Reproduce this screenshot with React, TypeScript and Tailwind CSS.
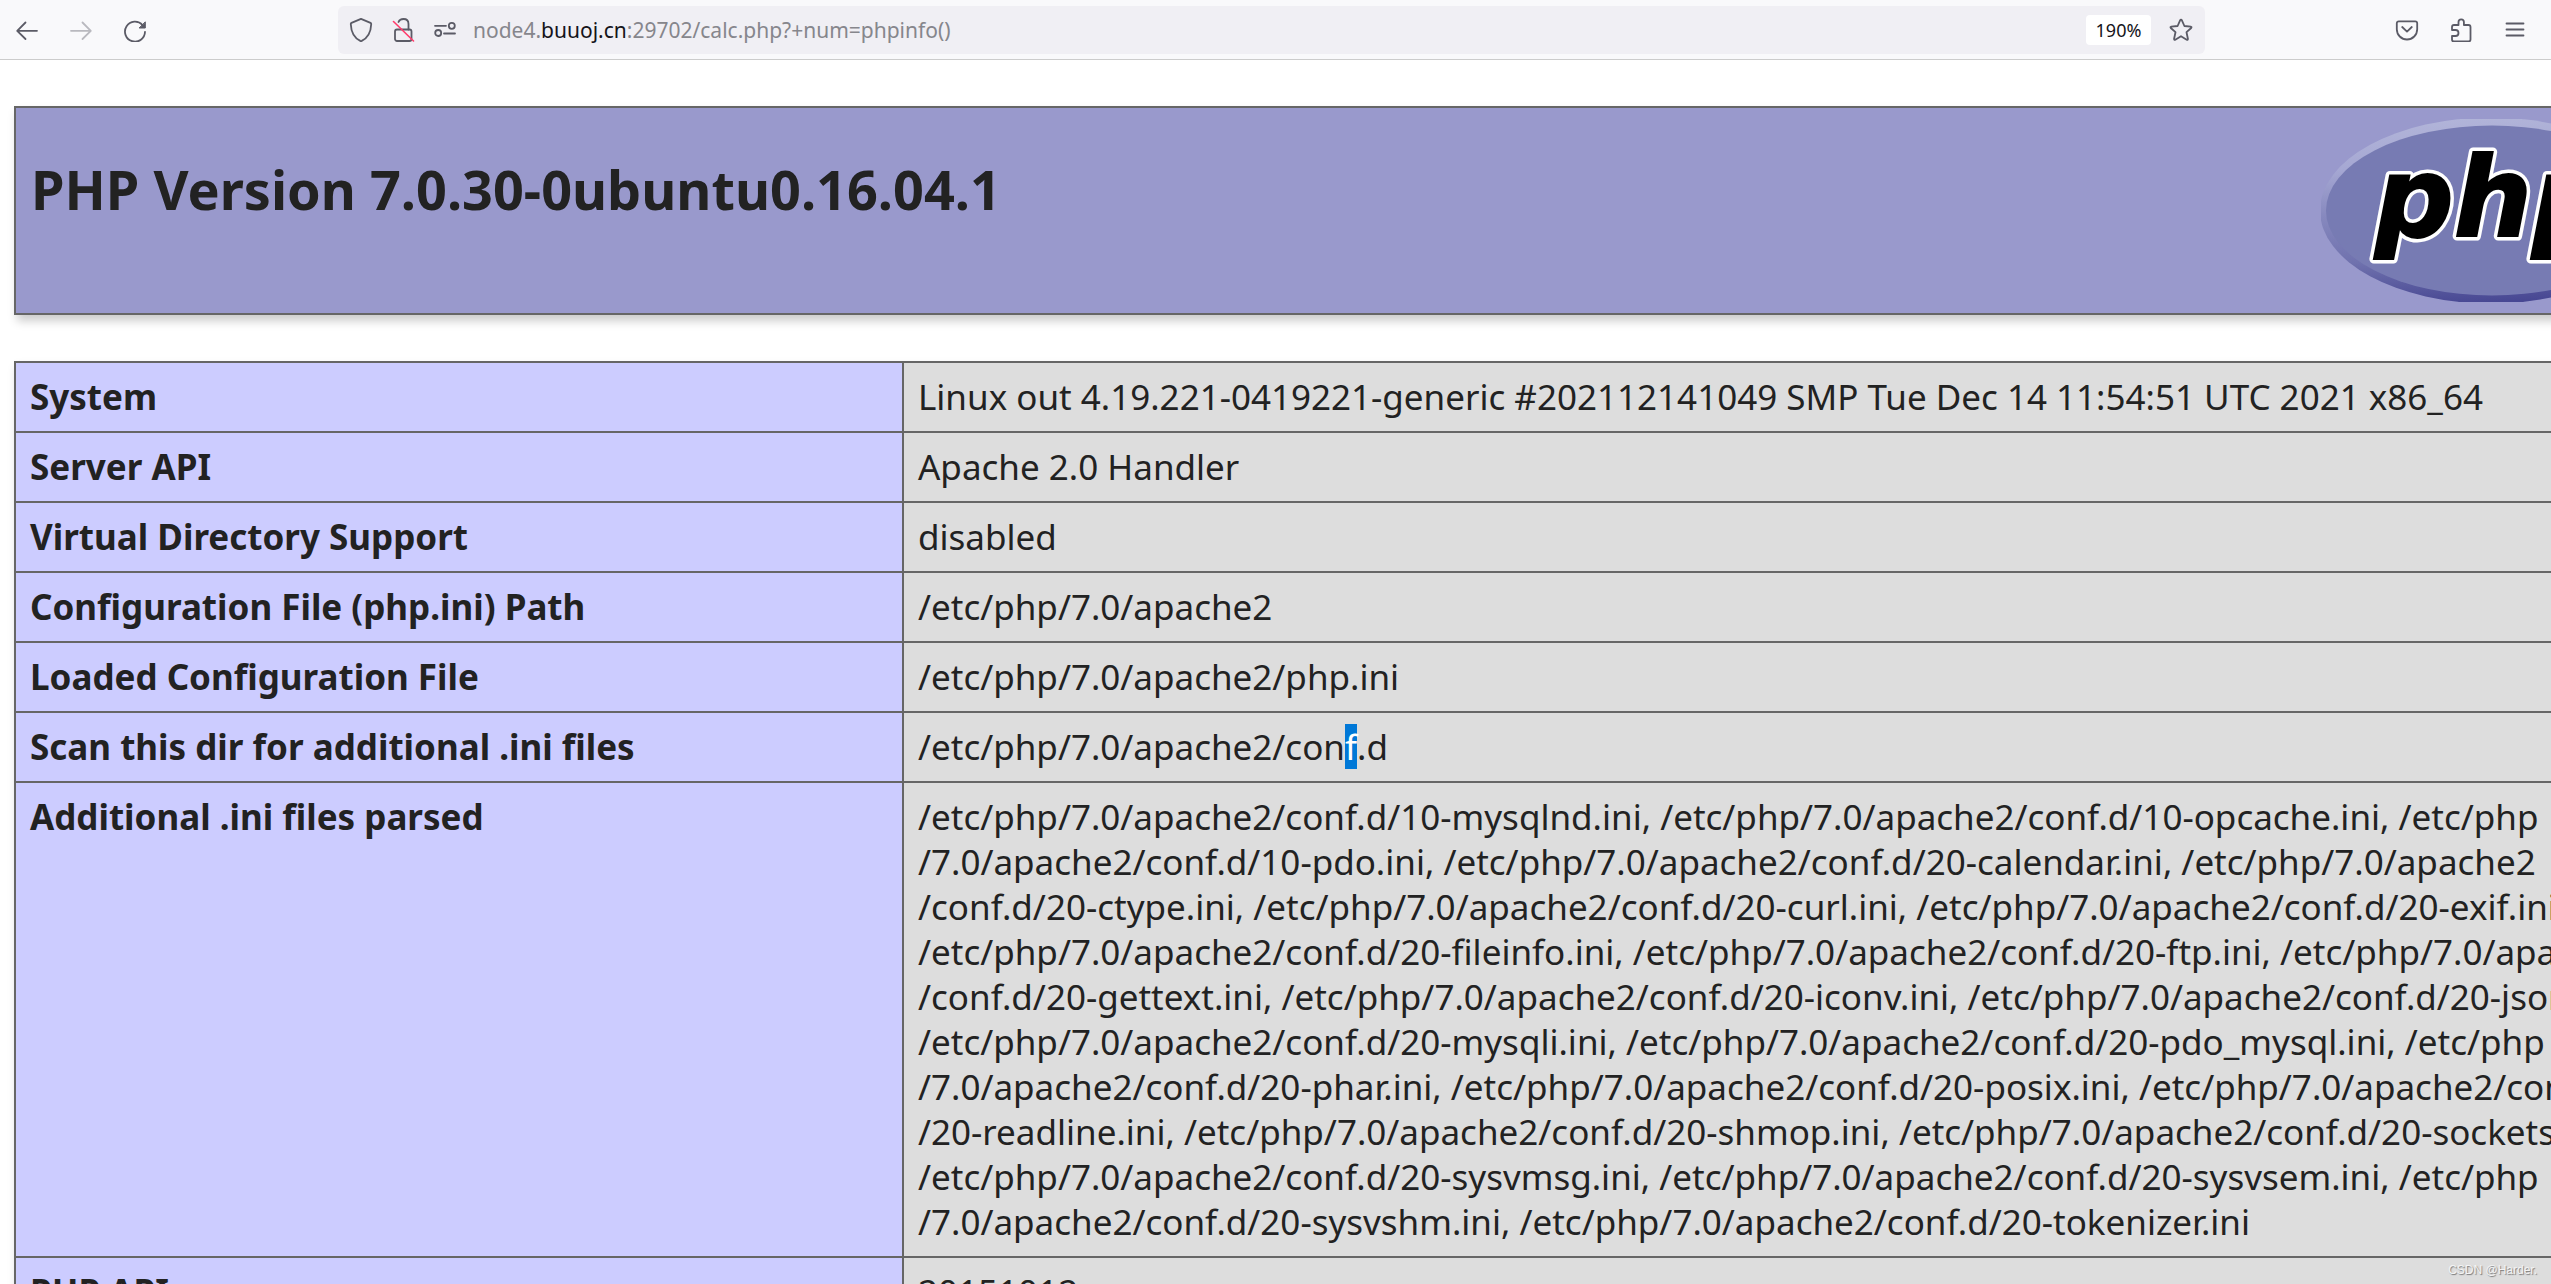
import type { ReactNode } from 'react'

interface InfoRow {
  name: string
  value: ReactNode
}

const parsedIniFiles = [
  '/etc/php/7.0/apache2/conf.d/10-mysqlnd.ini, /etc/php/7.0/apache2/conf.d/10-opcache.ini, /etc/php',
  '/7.0/apache2/conf.d/10-pdo.ini, /etc/php/7.0/apache2/conf.d/20-calendar.ini, /etc/php/7.0/apache2',
  '/conf.d/20-ctype.ini, /etc/php/7.0/apache2/conf.d/20-curl.ini, /etc/php/7.0/apache2/conf.d/20-exif.ini,',
  '/etc/php/7.0/apache2/conf.d/20-fileinfo.ini, /etc/php/7.0/apache2/conf.d/20-ftp.ini, /etc/php/7.0/apache2',
  '/conf.d/20-gettext.ini, /etc/php/7.0/apache2/conf.d/20-iconv.ini, /etc/php/7.0/apache2/conf.d/20-json.ini,',
  '/etc/php/7.0/apache2/conf.d/20-mysqli.ini, /etc/php/7.0/apache2/conf.d/20-pdo_mysql.ini, /etc/php',
  '/7.0/apache2/conf.d/20-phar.ini, /etc/php/7.0/apache2/conf.d/20-posix.ini, /etc/php/7.0/apache2/conf.d',
  '/20-readline.ini, /etc/php/7.0/apache2/conf.d/20-shmop.ini, /etc/php/7.0/apache2/conf.d/20-sockets.ini,',
  '/etc/php/7.0/apache2/conf.d/20-sysvmsg.ini, /etc/php/7.0/apache2/conf.d/20-sysvsem.ini, /etc/php',
  '/7.0/apache2/conf.d/20-sysvshm.ini, /etc/php/7.0/apache2/conf.d/20-tokenizer.ini',
]

const rows: InfoRow[] = [
  { name: 'System', value: 'Linux out 4.19.221-0419221-generic #202112141049 SMP Tue Dec 14 11:54:51 UTC 2021 x86_64' },
  { name: 'Server API', value: 'Apache 2.0 Handler' },
  { name: 'Virtual Directory Support', value: 'disabled' },
  { name: 'Configuration File (php.ini) Path', value: '/etc/php/7.0/apache2' },
  { name: 'Loaded Configuration File', value: '/etc/php/7.0/apache2/php.ini' },
  {
    name: 'Scan this dir for additional .ini files',
    value: (
      <>
        /etc/php/7.0/apache2/con<span className="inline-block bg-[#0078d7] text-white">f</span>.d
      </>
    ),
  },
  {
    name: 'Additional .ini files parsed',
    value: parsedIniFiles.map((line) => (
      <span key={line} className="block">
        {line}
      </span>
    )),
  },
  { name: 'PHP API', value: '20151012' },
]

const iconProps = {
  width: 24,
  height: 24,
  viewBox: '0 0 24 24',
  fill: 'none',
  stroke: 'currentColor',
  strokeWidth: 1.8,
  strokeLinecap: 'round' as const,
  strokeLinejoin: 'round' as const,
  'aria-hidden': true,
}

function BackIcon() {
  return (
    <svg {...iconProps}>
      <path d="M22 12.8H2.5M10.5 4.5L2.2 12.8l8.3 8.2" />
    </svg>
  )
}

function ForwardIcon() {
  return (
    <svg {...iconProps}>
      <path d="M2 12.8h19.5M13.5 4.5l8.3 8.3-8.3 8.2" />
    </svg>
  )
}

function ReloadIcon() {
  return (
    <svg {...iconProps}>
      <path d="M22 13.8A10 10 0 1 1 19.5 7" />
      <path d="M22.3 4.2v5.8h-5.8z" fill="currentColor" strokeWidth={1} />
    </svg>
  )
}

function ShieldIcon() {
  return (
    <svg {...iconProps}>
      <path d="M12 .2L21.5 4.2Q22.300 4.600 22.200 5.500C21.900 13.500 18.500 19.300 12.700 22.200Q12 22.500 11.300 22.200C5.500 19.300 2.100 13.500 1.800 5.500Q1.700 4.600 2.500 4.200L12 .2z" transform="translate(0 .7)" />
    </svg>
  )
}

function InsecureIcon() {
  return (
    <svg {...iconProps}>
      <rect x="4" y="11.5" width="16.5" height="11.5" rx="2" />
      <path d="M7.500 4C8.300 2 10 1 12.500 1c3 0 5 2 5 5v5.500" />
      <path d="M2.500 3.500l20 19.500" stroke="#ff3b6b" strokeWidth={1.6} />
    </svg>
  )
}

function PermissionsIcon() {
  return (
    <svg {...iconProps}>
      <circle cx="18.800" cy="7.800" r="3" />
      <circle cx="5.200" cy="15" r="3" />
      <path d="M2 7.800h11M11 15.500h11" />
    </svg>
  )
}

function StarIcon() {
  return (
    <svg {...iconProps}>
      <path d="M12 1.600q.6 0 .9.700l2.500 5.700 6.300.600q1.400.300.500 1.400l-4.700 4.200 1.400 6.600q.100 1.500-1.200.900L12 18.200l-5.700 3.500q-1.300.600-1.200-.900l1.400-6.600L1.800 10q-.900-1.100.500-1.400l6.300-.600L11.100 2.300q.3-.7.900-.7z" />
    </svg>
  )
}

function PocketIcon() {
  return (
    <svg {...iconProps}>
      <path d="M3.800 3.300h16.400q2 0 2 2v6A10.200 10.200 0 0 1 1.800 11.300v-6q0-2 2-2z" />
      <path d="M7.200 9l4.800 4.600L16.800 9" />
    </svg>
  )
}

function ExtensionIcon() {
  return (
    <svg {...iconProps}>
      <path d="M3 12V9q0-2 2-2h4.500V4a2.700 2.700 0 0 1 5.400 0v3H19.500q2 0 2 2v12.500q0 2-2 2H5q-2 0-2-2V18h3.500a3 3 0 0 0 0-6z" />
    </svg>
  )
}

function MenuIcon() {
  return (
    <svg {...iconProps}>
      <path d="M3.500 5.500h17M3.500 11.500h17M3.500 17.500h17" />
    </svg>
  )
}

function PhpLogo() {
  return (
    <svg width="342" height="183" viewBox="0 0 342 183" role="img" aria-label="PHP logo">
      <defs>
        <linearGradient id="rim" x1="0.3" y1="0" x2="0.4" y2="1">
          <stop offset="0" stopColor="#b2b5d9" />
          <stop offset="0.25" stopColor="#a6a8d3" />
          <stop offset="0.5" stopColor="#8688be" />
          <stop offset="0.75" stopColor="#7072ae" />
          <stop offset="1" stopColor="#484893" />
        </linearGradient>
        <text id="wordmark" x="54" y="117" className="font-['DejaVu_Sans'] text-[110px] font-bold italic">
          php
        </text>
      </defs>
      <ellipse cx="170" cy="91.5" rx="171" ry="93" fill="url(#rim)" />
      <ellipse cx="171" cy="91.5" rx="166" ry="85" fill="#777bb3" />
      <use href="#wordmark" fill="#fff" stroke="#fff" strokeWidth="9" strokeLinejoin="round" />
      <use href="#wordmark" fill="#000" stroke="#000" strokeWidth="2" />
    </svg>
  )
}

function Toolbar() {
  return (
    <header className="flex h-[60px] shrink-0 items-center border-b border-[#cccccc] bg-[#f9f9fb] text-[#5b5b66]">
      <nav className="flex w-[338px] shrink-0 gap-[30px] pl-[15px]">
        <button aria-label="Back">
          <BackIcon />
        </button>
        <button aria-label="Forward" className="text-[#b9b9bf]" disabled>
          <ForwardIcon />
        </button>
        <button aria-label="Reload">
          <ReloadIcon />
        </button>
      </nav>
      <div className="flex h-12 flex-1 items-center rounded-md bg-[#f0eff4] pr-3 pl-[11px]">
        <div className="flex gap-[18px]">
          <button aria-label="Tracking protection">
            <ShieldIcon />
          </button>
          <button aria-label="Connection not secure">
            <InsecureIcon />
          </button>
          <button aria-label="Site permissions">
            <PermissionsIcon />
          </button>
        </div>
        <div
          role="textbox"
          aria-label="Address"
          contentEditable
          suppressContentEditableWarning
          spellCheck={false}
          className="ml-4 flex-1 text-[21px] leading-8 whitespace-nowrap text-[#86868c] outline-none"
        >
          node4.<span className="text-[#15141a]">buuoj.cn</span>:29702/calc.php?+num=phpinfo()
        </div>
        <button className="h-[30px] w-[65px] rounded bg-white text-[18px] leading-[30px] text-[#15141a]">190%</button>
        <button aria-label="Bookmark this page" className="ml-[18px]">
          <StarIcon />
        </button>
      </div>
      <div className="flex w-[346px] shrink-0 justify-end gap-[30px] pr-6">
        <button aria-label="Save to Pocket">
          <PocketIcon />
        </button>
        <button aria-label="Extensions">
          <ExtensionIcon />
        </button>
        <button aria-label="Open menu">
          <MenuIcon />
        </button>
      </div>
    </header>
  )
}

export default function App() {
  return (
    <div className="relative flex h-screen flex-col overflow-hidden bg-white font-['Noto_Sans',sans-serif]">
      <Toolbar />

      <main className="flex flex-1 flex-col gap-[46px] overflow-hidden pt-[46px] pl-[14px] text-[35px] leading-[45px] text-[#222222]">
        {/* Version banner */}
        <section className="flex w-[2662px] shrink-0 items-start justify-between border-2 border-[#666666] bg-[#9999cc] p-[11px] shadow-[3px_6px_9px_#cccccc]">
          <h1 className="pt-9 pl-1 text-[54px] leading-[68px] font-bold">PHP Version 7.0.30-0ubuntu0.16.04.1</h1>
          <PhpLogo />
        </section>

        {/* Configuration summary */}
        <table className="w-[2662px] shrink-0 table-fixed border-collapse shadow-[3px_6px_9px_#cccccc]">
          <colgroup>
            <col className="w-[888px]" />
            <col />
          </colgroup>
          <tbody>
            {rows.map((row) => (
              <tr key={row.name} className="align-top">
                <th
                  scope="row"
                  className="border-2 border-[#666666] bg-[#ccccff] px-[14px] pt-[11px] pb-3 text-left font-bold"
                >
                  {row.name}
                </th>
                <td className="border-2 border-[#666666] bg-[#dddddd] px-[14px] pt-[11px] pb-3 whitespace-nowrap">
                  {row.value}
                </td>
              </tr>
            ))}
          </tbody>
        </table>
      </main>

      <span className="absolute right-[14px] bottom-[6px] font-['Liberation_Sans',sans-serif] text-[12px] leading-4 text-[#f4f4f4] [text-shadow:1px_1px_1px_#777777]">
        CSDN @Harder.
      </span>
    </div>
  )
}
